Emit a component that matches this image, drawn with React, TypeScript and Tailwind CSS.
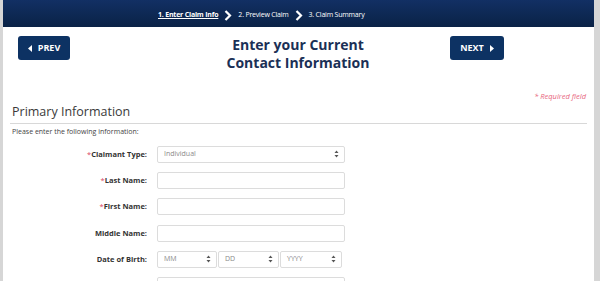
import React from "react";

const NAVY = "bg-[#0d3263]";

function Arrows() {
	return (
		<svg width="5" height="8" viewBox="0 0 5 8" className="shrink-0">
			<path d="M2.5 0.5 L4.5 3 L0.5 3 Z" fill="#555" />
			<path d="M2.5 7.5 L4.5 5 L0.5 5 Z" fill="#555" />
		</svg>
	);
}

function Chevron() {
	return (
		<svg width="8" height="11" viewBox="0 0 8 11" className="mx-[6px]">
			<path d="M1.5 1 L6 5.5 L1.5 10" stroke="#fff" strokeWidth="2.2" fill="none" />
		</svg>
	);
}

function Field({
	label,
	required,
	children,
}: {
	label: string;
	required?: boolean;
	children?: React.ReactNode;
}) {
	return (
		<div className="flex h-[17px] items-center">
			<div className="w-[145px] pr-[1px] text-right text-[7.5px] font-bold text-[#333]">
				{required && <span className="font-normal text-[#d9455f]">*</span>}
				{label}
			</div>
			<div className="ml-[9px] flex">
				{children ?? (
					<div className="h-[17px] w-[188px] rounded-[2px] border border-[#dcdcdc] bg-white" />
				)}
			</div>
		</div>
	);
}

function Select({ text, width }: { text: string; width: string }) {
	return (
		<div
			className={`flex h-[17px] items-center justify-between rounded-[2px] border border-[#dcdcdc] bg-white pl-[6px] pr-[5px] text-[7px] text-[#8a8a8a] ${width}`}
		>
			<span>{text}</span>
			<Arrows />
		</div>
	);
}

export default function App() {
	return (
		<div
			className="h-[281px] w-[600px] overflow-hidden bg-[#d6d6d6]"
			style={{ fontFamily: '"Open Sans", "Liberation Sans", sans-serif' }}
		>
			<div className="ml-[3px] h-[281px] w-[591px] bg-white">
				{/* step bar */}
				<div className="flex h-[27px] items-center bg-gradient-to-b from-[#123064] to-[#0a2246] pl-[155px] pt-[3px] text-[7px] tracking-[-0.2px] text-white">
					<span className="font-bold underline">1. Enter Claim Info</span>
					<Chevron />
					<span>2. Preview Claim</span>
					<Chevron />
					<span>3. Claim Summary</span>
				</div>

				{/* title row */}
				<div className="mt-[9px] flex items-start pl-[15px]">
					<button
						className={`flex h-[24px] w-[52px] items-center justify-center gap-[6px] rounded-[3px] ${NAVY} text-[9px] font-bold text-white`}
					>
						<svg width="4" height="7" viewBox="0 0 4 7">
							<path d="M4 0 L0 3.5 L4 7 Z" fill="#fff" />
						</svg>
						PREV
					</button>
					<h1 className="ml-[78px] w-[300px] text-center text-[14px] leading-[17.5px] font-bold text-[#1b3056]">
						Enter your Current
						<br />
						Contact Information
					</h1>
					<button
						className={`ml-[2px] flex h-[24px] w-[54px] items-center justify-center gap-[6px] rounded-[3px] ${NAVY} text-[9px] font-bold text-white`}
					>
						NEXT
						<svg width="4" height="7" viewBox="0 0 4 7">
							<path d="M0 0 L4 3.5 L0 7 Z" fill="#fff" />
						</svg>
					</button>
				</div>

				<div className="mt-[20px] pr-[8px] text-right text-[7.5px] italic text-[#e8667e]">
					* Required field
				</div>

				<div className="mx-[7px] mt-[1px] border-b border-[#d8d8d8] pb-[2px] pl-[2px] text-[12.5px] leading-[18px] text-[#3a3a3a]">
					Primary Information
				</div>

				<div className="mt-[3px] pl-[9px] text-[7px] text-[#444]">
					Please enter the following information:
				</div>

				<div className="mt-[8px] flex flex-col gap-[9.3px]">
					<Field label="Claimant Type:" required>
						<div className="flex h-[17px] w-[188px] items-center justify-between rounded-[2px] border border-[#dcdcdc] bg-white pl-[6px] pr-[5px] text-[7px] text-[#8a8a8a]">
							<span>Individual</span>
							<Arrows />
						</div>
					</Field>
					<Field label="Last Name:" required />
					<Field label="First Name:" required />
					<Field label="Middle Name:" />
					<Field label="Date of Birth:">
						<div className="flex gap-[1px]">
							<Select text="MM" width="w-[60px]" />
							<Select text="DD" width="w-[61px]" />
							<Select text="YYYY" width="w-[62px]" />
						</div>
					</Field>
					<Field label="" />
				</div>
			</div>
		</div>
	);
}
